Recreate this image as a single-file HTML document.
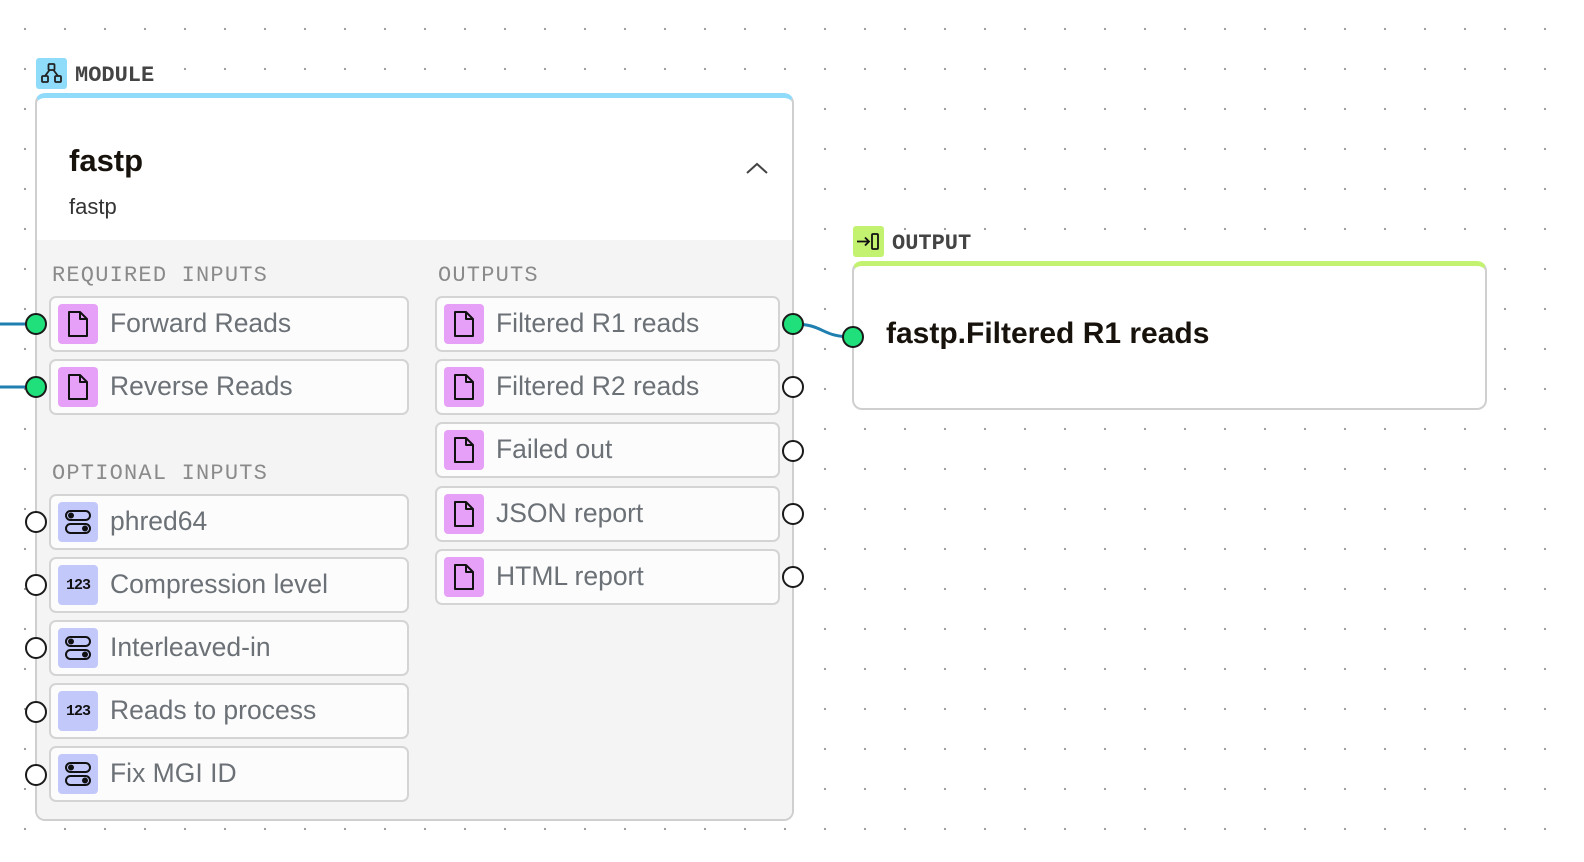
<!DOCTYPE html>
<html><head><meta charset="utf-8"><style>
*{box-sizing:border-box;margin:0;padding:0}
body{width:1584px;height:862px;overflow:hidden;background:#fff;position:relative;font-family:"Liberation Sans",sans-serif;
background-image:radial-gradient(circle,#9a9a9a 1px,transparent 1.3px);background-size:40px 40px;background-position:5px 9px}
.abs{position:absolute}
.lbl{position:absolute;font-family:"Liberation Mono",monospace;font-weight:bold;font-size:22px;color:#444}
.tag{position:absolute;width:31px;height:31px;border-radius:3px}
.card{position:absolute;border:2px solid #cfcfcf;border-radius:10px;background:#fff;overflow:hidden}
.sec{position:absolute;font-family:"Liberation Mono",monospace;font-size:22px;color:#8a8a8a;letter-spacing:1.2px}
.row{position:absolute;height:56px;border:2px solid #d4d4d4;border-radius:7px;background:#fcfcfc}
.row .ic{position:absolute;left:7px;top:6px;width:40px;height:40px;border-radius:4px;display:flex;align-items:center;justify-content:center}
.row .t{position:absolute;left:59px;top:10px;font-size:26.5px;color:#6b7176;white-space:nowrap}
.f{background:#e7a0f7}.b{background:#c3c8fb}
.h{position:absolute;width:22px;height:22px;border-radius:50%;border:2px solid #1a1a1a;background:#fff}
.g{background:#1fe07a}
.num{font-family:"Liberation Mono",monospace;font-weight:bold;font-size:15px;color:#111;letter-spacing:-1px}
</style></head><body>

<svg class="abs" style="left:0;top:0" width="1584" height="862">
<path d="M0 324 H36" stroke="#1f7fb0" stroke-width="3" fill="none"/>
<path d="M0 387 H36" stroke="#1f7fb0" stroke-width="3" fill="none"/>
<path d="M793 324 C825 324 820 337 853 337" stroke="#1f7fb0" stroke-width="3" fill="none"/>
</svg>

<div class="tag" style="left:36px;top:58px;background:#8fdcfa"></div>
<svg class="abs" style="left:36px;top:58px" width="31" height="31" viewBox="0 0 31 31" fill="none" stroke="#222" stroke-width="1.8">
<rect x="12.5" y="6" width="6" height="6" rx="1"/><rect x="6" y="18" width="6" height="6" rx="1"/><rect x="19" y="18" width="6" height="6" rx="1"/>
<path d="M13.5 12 L9 18 M17.5 12 L22 18"/></svg>
<div class="lbl" style="left:75px;top:63px">MODULE</div>

<div class="card" style="left:35px;top:93px;width:759px;height:728px;border-top:5px solid #90dbf9">
 <div class="abs" style="left:0;top:142px;width:100%;height:600px;background:#f4f4f4"></div>
 <div class="abs" style="left:32px;top:45px;font-size:31px;font-weight:bold;color:#17120c">fastp</div>
 <div class="abs" style="left:32px;top:96px;font-size:22px;color:#333">fastp</div>
 <svg class="abs" style="left:708px;top:63px" width="24" height="14"><path d="M2 12 L12 3 L22 12" stroke="#444" stroke-width="2" fill="none"/></svg>
</div>

<div class="sec" style="left:52px;top:263px">REQUIRED INPUTS</div>
<div class="sec" style="left:438px;top:263px">OUTPUTS</div>
<div class="sec" style="left:52px;top:461px">OPTIONAL INPUTS</div>

<div class="row" style="left:49px;top:296px;width:360px"><div class="ic f"><svg width="22" height="28" viewBox="0 0 22 28"><path d="M2 2 H13 L20 9 V26 H2 Z M13 2 V9 H20" stroke="#111" stroke-width="2" fill="none" stroke-linejoin="round"/></svg></div><div class="t">Forward Reads</div></div>
<div class="row" style="left:49px;top:359px;width:360px"><div class="ic f"><svg width="22" height="28" viewBox="0 0 22 28"><path d="M2 2 H13 L20 9 V26 H2 Z M13 2 V9 H20" stroke="#111" stroke-width="2" fill="none" stroke-linejoin="round"/></svg></div><div class="t">Reverse Reads</div></div>

<div class="row" style="left:49px;top:494px;width:360px"><div class="ic b"><svg width="28" height="26" viewBox="0 0 28 26" fill="none" stroke="#111" stroke-width="2"><rect x="2" y="2" width="24" height="9" rx="4.5"/><rect x="2" y="15" width="24" height="9" rx="4.5"/><circle cx="7" cy="6.5" r="2" fill="#111"/><circle cx="21" cy="19.5" r="2" fill="#111"/></svg></div><div class="t">phred64</div></div>
<div class="row" style="left:49px;top:557px;width:360px"><div class="ic b"><span class="num">123</span></div><div class="t">Compression level</div></div>
<div class="row" style="left:49px;top:620px;width:360px"><div class="ic b"><svg width="28" height="26" viewBox="0 0 28 26" fill="none" stroke="#111" stroke-width="2"><rect x="2" y="2" width="24" height="9" rx="4.5"/><rect x="2" y="15" width="24" height="9" rx="4.5"/><circle cx="7" cy="6.5" r="2" fill="#111"/><circle cx="21" cy="19.5" r="2" fill="#111"/></svg></div><div class="t">Interleaved-in</div></div>
<div class="row" style="left:49px;top:683px;width:360px"><div class="ic b"><span class="num">123</span></div><div class="t">Reads to process</div></div>
<div class="row" style="left:49px;top:746px;width:360px"><div class="ic b"><svg width="28" height="26" viewBox="0 0 28 26" fill="none" stroke="#111" stroke-width="2"><rect x="2" y="2" width="24" height="9" rx="4.5"/><rect x="2" y="15" width="24" height="9" rx="4.5"/><circle cx="7" cy="6.5" r="2" fill="#111"/><circle cx="21" cy="19.5" r="2" fill="#111"/></svg></div><div class="t">Fix MGI ID</div></div>

<div class="row" style="left:435px;top:296px;width:345px"><div class="ic f"><svg width="22" height="28" viewBox="0 0 22 28"><path d="M2 2 H13 L20 9 V26 H2 Z M13 2 V9 H20" stroke="#111" stroke-width="2" fill="none" stroke-linejoin="round"/></svg></div><div class="t">Filtered R1 reads</div></div>
<div class="row" style="left:435px;top:359px;width:345px"><div class="ic f"><svg width="22" height="28" viewBox="0 0 22 28"><path d="M2 2 H13 L20 9 V26 H2 Z M13 2 V9 H20" stroke="#111" stroke-width="2" fill="none" stroke-linejoin="round"/></svg></div><div class="t">Filtered R2 reads</div></div>
<div class="row" style="left:435px;top:422px;width:345px"><div class="ic f"><svg width="22" height="28" viewBox="0 0 22 28"><path d="M2 2 H13 L20 9 V26 H2 Z M13 2 V9 H20" stroke="#111" stroke-width="2" fill="none" stroke-linejoin="round"/></svg></div><div class="t">Failed out</div></div>
<div class="row" style="left:435px;top:486px;width:345px"><div class="ic f"><svg width="22" height="28" viewBox="0 0 22 28"><path d="M2 2 H13 L20 9 V26 H2 Z M13 2 V9 H20" stroke="#111" stroke-width="2" fill="none" stroke-linejoin="round"/></svg></div><div class="t">JSON report</div></div>
<div class="row" style="left:435px;top:549px;width:345px"><div class="ic f"><svg width="22" height="28" viewBox="0 0 22 28"><path d="M2 2 H13 L20 9 V26 H2 Z M13 2 V9 H20" stroke="#111" stroke-width="2" fill="none" stroke-linejoin="round"/></svg></div><div class="t">HTML report</div></div>

<div class="h g" style="left:25px;top:313px"></div>
<div class="h g" style="left:25px;top:376px"></div>
<div class="h" style="left:25px;top:511px"></div>
<div class="h" style="left:25px;top:574px"></div>
<div class="h" style="left:25px;top:637px"></div>
<div class="h" style="left:25px;top:701px"></div>
<div class="h" style="left:25px;top:764px"></div>
<div class="h g" style="left:782px;top:313px"></div>
<div class="h" style="left:782px;top:376px"></div>
<div class="h" style="left:782px;top:440px"></div>
<div class="h" style="left:782px;top:503px"></div>
<div class="h" style="left:782px;top:566px"></div>

<div class="tag" style="left:853px;top:226px;background:#c2f26f"></div>
<svg class="abs" style="left:853px;top:226px" width="31" height="31" fill="none" stroke="#111" stroke-width="1.8"><path d="M4 15.5 H16 M12 11.5 L16 15.5 L12 19.5"/><rect x="19" y="8" width="6" height="15" rx="1"/></svg>
<div class="lbl" style="left:892px;top:231px">OUTPUT</div>

<div class="card" style="left:852px;top:261px;width:635px;height:149px;border-top:5px solid #c2f26f">
 <div class="abs" style="left:32px;top:51px;font-size:30px;font-weight:bold;color:#17120c;white-space:nowrap">fastp.Filtered R1 reads</div>
</div>
<div class="h g" style="left:842px;top:326px"></div>
</body></html>
